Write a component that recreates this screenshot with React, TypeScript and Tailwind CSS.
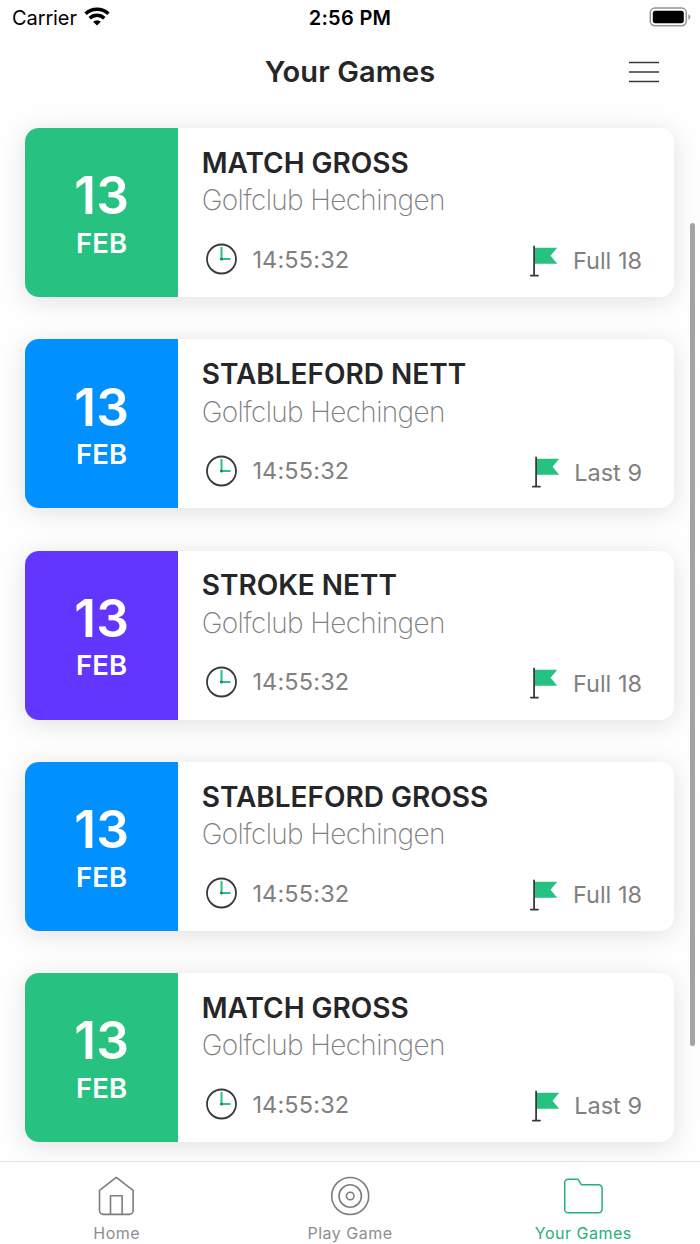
import clsx from "clsx";

type Game = {
  title: string;
  club: string;
  day: string;
  month: string;
  time: string;
  holes: string;
  color: string;
};

const base = {
  club: "Golfclub Hechingen",
  day: "13",
  month: "FEB",
  time: "14:55:32",
};

const games: Game[] = [
  { ...base, title: "MATCH GROSS", holes: "Full 18", color: "bg-[#27c281]" },
  { ...base, title: "STABLEFORD NETT", holes: "Last 9", color: "bg-[#0090ff]" },
  { ...base, title: "STROKE NETT", holes: "Full 18", color: "bg-[#6236ff]" },
  { ...base, title: "STABLEFORD GROSS", holes: "Full 18", color: "bg-[#0090ff]" },
  { ...base, title: "MATCH GROSS", holes: "Last 9", color: "bg-[#27c281]" },
];

function WifiIcon() {
  return (
    <svg width="26" height="20" viewBox="0 0 26 20" fill="none" stroke="#000" strokeWidth="3.4">
      <path d="M1.6 6.8a16.4 16.4 0 0 1 22.8 0" />
      <path d="M5.7 11.2a10.4 10.4 0 0 1 14.6 0" />
      <path d="M13 18.5l-3.8-3.7a5.4 5.4 0 0 1 7.6 0z" fill="#000" stroke="none" />
    </svg>
  );
}

function BatteryIcon() {
  return (
    <svg width="42" height="20" viewBox="0 0 42 20" fill="none">
      <rect x="1.3" y="1.1" width="36" height="17.6" rx="4.6" stroke="#969696" strokeWidth="1.5" />
      <rect x="3.8" y="3.8" width="31" height="12.4" rx="2.6" fill="#000" />
      <path d="M39.4 7.2v5.6c1.3-.5 1.9-1.6 1.9-2.8s-.6-2.3-1.9-2.8z" fill="#969696" />
    </svg>
  );
}

function ClockIcon() {
  return (
    <svg width="33" height="32" viewBox="0 0 33 32" fill="none">
      <circle cx="16.5" cy="16" r="14.5" stroke="#3a3a3c" strokeWidth="1.8" />
      <path d="M16.5 4.8V16h8.3" stroke="#27c281" strokeWidth="2" strokeLinecap="round" />
      <circle cx="16.5" cy="16" r="1.6" fill="#1f8a60" />
    </svg>
  );
}

function FlagIcon() {
  return (
    <svg width="28" height="32" viewBox="0 0 28 32" fill="none">
      <path d="M5 2.8h22.2l-6.6 7.9 6.6 8H5z" fill="#27c281" />
      <path d="M4.1 1.4v29M0.8 30.6h7.2" stroke="#3a3a3c" strokeWidth="1.8" strokeLinecap="round" />
    </svg>
  );
}

function HomeIcon() {
  return (
    <svg width="40" height="40" viewBox="0 0 40 40" fill="none" stroke="#7d7d7d" strokeWidth="1.6" strokeLinejoin="round">
      <path d="M19.3 1.4l16.8 13v20.2a3.8 3.8 0 0 1-3.8 3.8h-26a3.8 3.8 0 0 1-3.8-3.8V14.4z" />
      <path d="M13.5 38.2V19.8h11.6v18.4" />
    </svg>
  );
}

function TargetIcon() {
  return (
    <svg width="40" height="40" viewBox="0 0 40 40" fill="none" stroke="#7d7d7d" strokeWidth="1.6">
      <circle cx="20.2" cy="20" r="18.5" />
      <circle cx="20.2" cy="20" r="11.2" />
      <circle cx="20.2" cy="20" r="3.8" />
    </svg>
  );
}

function FolderIcon() {
  return (
    <svg width="40" height="40" viewBox="0 0 40 40" fill="none" stroke="#23b277" strokeWidth="1.5" strokeLinejoin="round">
      <path d="M5.1 3.2h9.8l3.6 5.6h17a3.6 3.6 0 0 1 3.6 3.6v20.8a3.6 3.6 0 0 1-3.6 3.6H5.3a3.6 3.6 0 0 1-3.6-3.6V6.6a3.4 3.4 0 0 1 3.4-3.4z" />
    </svg>
  );
}

function GameCard({ game }: { game: Game }) {
  return (
    <div className="flex h-[169px] shrink-0 overflow-hidden rounded-[14px] bg-white shadow-[0_4px_26px_rgba(0,0,0,0.12)]">
      <div className={clsx("flex w-[152.5px] flex-col items-center pt-[42.4px] text-white", game.color)}>
        <span className="text-[51.5px] leading-[50px] font-semibold">{game.day}</span>
        <span className="mt-[3.5px] text-[27.5px] leading-[38px] font-semibold tracking-[0.1px]">{game.month}</span>
      </div>
      <div className="flex flex-1 flex-col pt-[16.8px] pr-[32px] pl-[23.8px]">
        <h2 className="text-[28px] leading-[37.5px] font-semibold text-[#262628]">{game.title}</h2>
        <p className="text-[28px] leading-[36.8px] font-extralight tracking-[-0.64px] text-[#808080]">{game.club}</p>
        <div className="mt-[23.4px] flex h-[34px] items-center justify-between text-[23.5px] text-[#808080]">
          <div className="flex items-center gap-[14px] pl-[3.7px]">
            <ClockIcon />
            <span className="tracking-[0.15px]">{game.time}</span>
          </div>
          <div className="flex items-center gap-[14.5px] pt-[3px]">
            <FlagIcon />
            <span>{game.holes}</span>
          </div>
        </div>
      </div>
    </div>
  );
}

const tabs = [
  { label: "Home", Icon: HomeIcon, active: false },
  { label: "Play Game", Icon: TargetIcon, active: false },
  { label: "Your Games", Icon: FolderIcon, active: true },
];

export default function App() {
  return (
    <div className="relative flex h-[1244px] w-[700px] flex-col overflow-hidden bg-[#fefefe] font-['Inter','Liberation_Sans',sans-serif]">
      <div className="grid h-9 grid-cols-3 items-center pr-[9px] pl-[12px] text-[20px] leading-6 text-black">
        <div className="flex items-center gap-[7px]">
          <span className="tracking-[-0.1px]">Carrier</span>
          <div className="-mt-[3px]">
            <WifiIcon />
          </div>
        </div>
        <span className="-ml-[3px] text-center font-semibold tracking-[0.3px]">2:56 PM</span>
        <div className="-mt-[2px] flex justify-end">
          <BatteryIcon />
        </div>
      </div>

      <header className="grid h-[72px] grid-cols-[1fr_auto_1fr] items-center px-[41px]">
        <h1 className="col-start-2 text-[29px] leading-[70px] font-semibold tracking-[0.1px] text-[#262628]">Your Games</h1>
        <button className="justify-self-end" aria-label="Menu">
          <svg width="30" height="24" viewBox="0 0 30 24" stroke="#3a3a3c" strokeWidth="1.6">
            <path d="M0 2.5h30M0 12h30M0 21.5h30" />
          </svg>
        </button>
      </header>

      <main className="flex min-h-0 flex-1 flex-col gap-[42.25px] overflow-hidden pt-[20px] pr-[26px] pl-[25.4px]">
        {games.map((game, i) => (
          <GameCard key={i} game={game} />
        ))}
      </main>

      <div className="absolute top-[223px] right-[5px] h-[823px] w-[5px] rounded-full bg-[#a3a3a3]" />

      <nav className="relative grid h-[83px] shrink-0 grid-cols-3 border-t border-[#e0e0e0] bg-[#fefefe]">
        {tabs.map(({ label, Icon, active }) => (
          <div key={label} className="flex flex-col items-center pt-[14px]">
            <Icon />
            <span
              className={clsx(
                "mt-[5px] text-[16px] leading-6 tracking-[0.5px]",
                active ? "text-[#23b277]" : "text-[#8e8e8e]"
              )}
            >
              {label}
            </span>
          </div>
        ))}
      </nav>
    </div>
  );
}
